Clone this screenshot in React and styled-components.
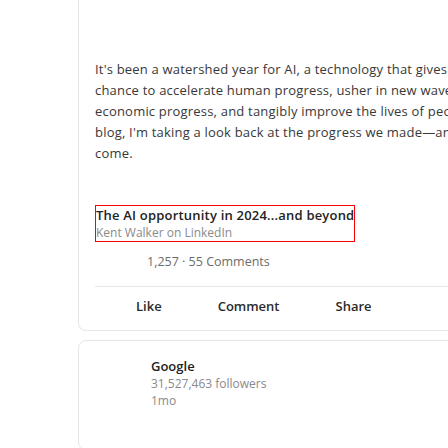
import React from 'react'
import styled, { createGlobalStyle } from 'styled-components'

const Global = createGlobalStyle`
  html, body {
    margin: 0;
    padding: 0;
    background: #fff;
    overflow: hidden;
  }
  body {
    font-family: "Open Sans", "Noto Sans", sans-serif;
    color: #383838;
  }
`

const Page = styled.div`
  width: 448px;
  height: 448px;
  overflow: hidden;
  padding-left: 78px;
  box-sizing: border-box;
  display: flex;
  flex-direction: column;
  gap: 9px;
`

const Card = styled.div`
  width: 560px;
  background: #fff;
  border: 1px solid #e6e6e6;
  border-top: ${p => (p.$cut ? 'none' : '1px solid #e6e6e6')};
  border-radius: ${p => (p.$cut ? '0 0 8px 8px' : '8px')};
  box-sizing: border-box;
  flex-shrink: 0;
`

const Body = styled.div`
  padding: 0 0 0 16px;
`

const Paragraph = styled.p`
  margin: 0;
  padding-top: 59px;
  font-size: 13px;
  line-height: 21px;
  letter-spacing: 0.2px;
  white-space: nowrap;
`

const LinkBox = styled.div`
  margin-top: 41px;
  display: inline-flex;
  flex-direction: column;
  border: 1px solid #f00;
`

const LinkTitle = styled.div`
  font-size: 13px;
  line-height: 18px;
  font-weight: 600;
  color: #222;
  letter-spacing: 0.2px;
  white-space: nowrap;
`

const LinkSource = styled.div`
  font-size: 12px;
  line-height: 17px;
  color: #8a8a8a;
`

const Stats = styled.div`
  margin: 11px 0 0 52px;
  font-size: 12.5px;
  line-height: 18px;
  color: #6b6b6b;
`

const Divider = styled.div`
  margin-top: 15px;
  height: 1px;
  background: #e8e8e8;
`

const Actions = styled.div`
  display: flex;
  gap: 56px;
  padding: 10px 0 0 41px;
  height: 43px;
  box-sizing: border-box;
`

const Action = styled.span`
  font-size: 13px;
  line-height: 18px;
  font-weight: 600;
  color: #2b2b2b;
`

const Company = styled.div`
  display: flex;
  gap: 8px;
  padding: 16px 0 40px 16px;
`

const Avatar = styled.div`
  width: 48px;
  height: 48px;
  flex-shrink: 0;
`

const CompanyInfo = styled.div`
  display: flex;
  flex-direction: column;
`

const CompanyName = styled.div`
  font-size: 13px;
  line-height: 18px;
  font-weight: 600;
  color: #222;
`

const Meta = styled.div`
  font-size: 12px;
  line-height: 17px;
  color: #8a8a8a;
`

export default function App() {
  return (
    <>
      <Global />
      <Page>
        <Card $cut>
          <Body>
            <Paragraph>
              It's been a watershed year for AI, a technology that gives us a once-in-a-generation
              <br />
              chance to accelerate human progress, usher in new waves of innovation and
              <br />
              economic progress, and tangibly improve the lives of people around the world. In this
              <br />
              blog, I'm taking a look back at the progress we made—and what's ahead in the year to
              <br />
              come.
            </Paragraph>
            <LinkBox>
              <LinkTitle>The AI opportunity in 2024...and beyond</LinkTitle>
              <LinkSource>Kent Walker on LinkedIn</LinkSource>
            </LinkBox>
            <Stats>1,257 · 55 Comments</Stats>
            <Divider />
            <Actions>
              <Action>Like</Action>
              <Action>Comment</Action>
              <Action>Share</Action>
            </Actions>
          </Body>
        </Card>
        <Card>
          <Company>
            <Avatar />
            <CompanyInfo>
              <CompanyName>Google</CompanyName>
              <Meta>31,527,463 followers</Meta>
              <Meta>1mo</Meta>
            </CompanyInfo>
          </Company>
        </Card>
      </Page>
    </>
  )
}
